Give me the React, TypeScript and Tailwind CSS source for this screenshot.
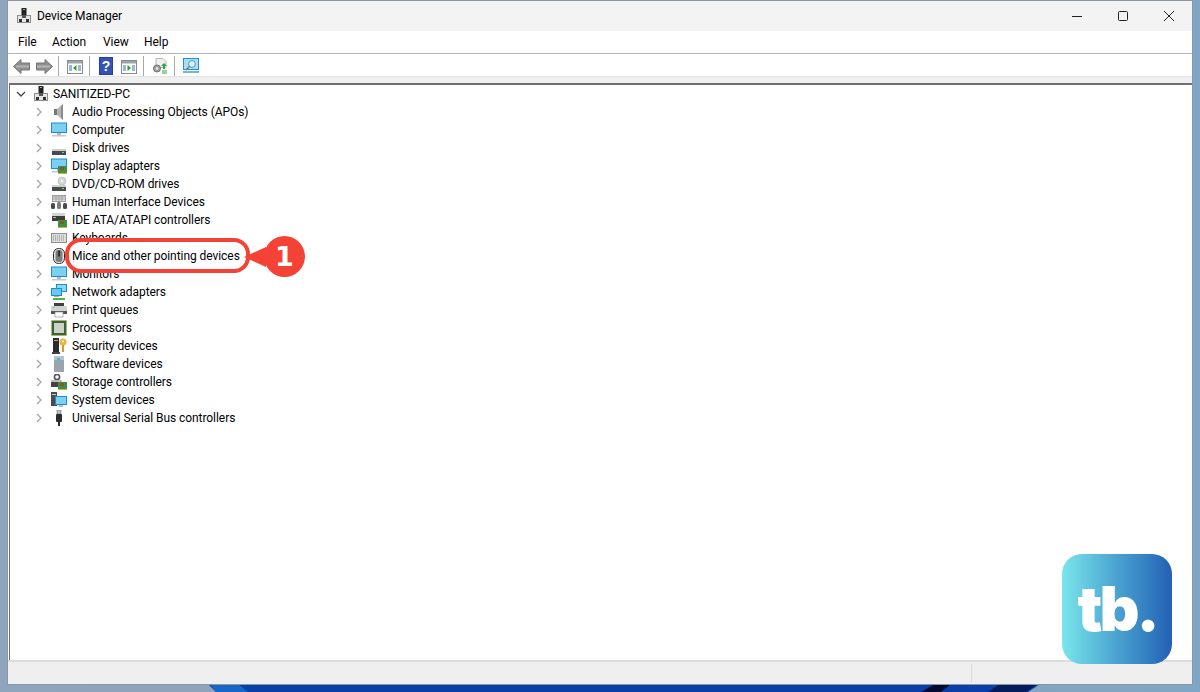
import type { ReactNode } from 'react';

const font = { fontFamily: 'Roboto, sans-serif' };

function Ico({ children }: { children: ReactNode }) {
  return (
    <svg width="16" height="16" viewBox="0 0 16 16" className="shrink-0">
      {children}
    </svg>
  );
}

function Chevron() {
  return (
    <svg width="8" height="10" viewBox="0 0 8 10" className="shrink-0">
      <path d="M2 1l4 4-4 4" fill="none" stroke="#a6a6a6" strokeWidth="1.3" />
    </svg>
  );
}

function Pc() {
  return (
    <Ico>
      <rect x="5.5" y="0" width="5" height="7" fill="#222" />
      <rect x="7" y="1" width="2" height="1" fill="#6fd06f" />
      <rect x="1" y="7" width="14" height="8" fill="#8d8d8d" />
      <rect x="2" y="8" width="12" height="6" fill="#e4e4e4" />
      <rect x="3" y="11" width="3" height="3" fill="#333" />
      <rect x="10" y="11" width="3" height="3" fill="#333" />
      <rect x="6" y="7" width="4" height="3" fill="#555" />
    </Ico>
  );
}

const Screen = () => (
  <>
    <rect x="0" y="0.5" width="16" height="10.5" fill="#1c8fd0" />
    <rect x="1" y="1.5" width="14" height="8.5" fill="#7cd0f4" />
    <rect x="6" y="11" width="4" height="2" fill="#bbb" />
    <rect x="1" y="13" width="14" height="1.5" fill="#c8c8c8" />
  </>
);

const Board = ({ x = 7, y = 8 }: { x?: number; y?: number }) => (
  <>
    <rect x={x} y={y} width="9" height="7" fill="#3e8f4e" />
    <rect x={x + 2} y={y + 1} width="4" height="3" fill="#7a5f22" />
    <rect x={x} y={y + 7} width="9" height="1" fill="#d8b030" />
  </>
);

const Drive = ({ y = 9 }: { y?: number }) => (
  <>
    <rect x="1" y={y} width="14" height="2" fill="#cfcfcf" />
    <rect x="1" y={y + 2} width="14" height="4" fill="#4a4a4a" />
    <rect x="11" y={y + 3} width="2" height="1" fill="#6fe06f" />
  </>
);

const tree: { name: string; icon: ReactNode }[] = [
  {
    name: 'Audio Processing Objects (APOs)',
    icon: (
      <Ico>
        <rect x="3" y="5" width="3" height="6" fill="#777" />
        <path d="M6 5l6-5v16l-6-5z" fill="#b4b4b4" />
        <path d="M10 2l2-2v16l-2-2z" fill="#8c8c8c" />
      </Ico>
    ),
  },
  { name: 'Computer', icon: <Ico><Screen /></Ico> },
  { name: 'Disk drives', icon: <Ico><Drive /></Ico> },
  { name: 'Display adapters', icon: <Ico><Screen /><Board /></Ico> },
  {
    name: 'DVD/CD-ROM drives',
    icon: (
      <Ico>
        <circle cx="11" cy="5" r="4" fill="#d6d6d6" stroke="#aaa" strokeWidth="0.5" />
        <circle cx="11" cy="5" r="1" fill="#fff" />
        <Drive />
      </Ico>
    ),
  },
  {
    name: 'Human Interface Devices',
    icon: (
      <Ico>
        <rect x="1" y="1" width="14" height="7" fill="#9c9c9c" />
        <rect x="2" y="2" width="12" height="5" fill="#dcdcdc" />
        <path d="M2 3h12M2 5h12M5 2v5M8 2v5M11 2v5" stroke="#8a8a8a" strokeWidth="0.6" />
        <rect x="0" y="9" width="4" height="6" rx="1.5" fill="#4a4a4a" />
        <rect x="6" y="8" width="4" height="7" rx="1.5" fill="#7b7b7b" />
        <rect x="12" y="9" width="4" height="6" rx="1.5" fill="#4a4a4a" />
      </Ico>
    ),
  },
  {
    name: 'IDE ATA/ATAPI controllers',
    icon: (
      <Ico>
        <rect x="1" y="1" width="13" height="3" fill="#d4d4d4" />
        <rect x="1" y="4" width="13" height="5" fill="#3d3d3d" />
        <rect x="2" y="5" width="3" height="1" fill="#6fe06f" />
        <Board />
      </Ico>
    ),
  },
  {
    name: 'Keyboards',
    icon: (
      <Ico>
        <rect x="0" y="3" width="16" height="10" fill="#8e8e8e" />
        <rect x="1" y="4" width="14" height="8" fill="#dedede" />
        <path d="M2 6h12M2 8h12M2 10h12" stroke="#8a8a8a" strokeWidth="1" strokeDasharray="1 1" />
      </Ico>
    ),
  },
  {
    name: 'Mice and other pointing devices',
    icon: (
      <Ico>
        <rect x="2.5" y="0.5" width="11" height="15" rx="5" fill="#e4e4e4" stroke="#2a2a2a" />
        <rect x="4.5" y="2" width="7" height="12" rx="3" fill="#7c7c7c" />
        <rect x="7.2" y="2.5" width="1.6" height="6" fill="#242424" />
      </Ico>
    ),
  },
  { name: 'Monitors', icon: <Ico><Screen /></Ico> },
  {
    name: 'Network adapters',
    icon: (
      <Ico>
        <rect x="5" y="0" width="11" height="8" fill="#1c8fd0" />
        <rect x="6" y="1" width="9" height="6" fill="#8ad6f4" />
        <rect x="0" y="4" width="11" height="8" fill="#1c8fd0" />
        <rect x="1" y="5" width="9" height="6" fill="#6cc8f0" />
        <rect x="3" y="12" width="5" height="1" fill="#aaa" />
        <rect x="2" y="14" width="12" height="2" fill="#48b848" />
      </Ico>
    ),
  },
  {
    name: 'Print queues',
    icon: (
      <Ico>
        <rect x="3" y="1" width="10" height="3" fill="#3f3f3f" />
        <rect x="0" y="4" width="16" height="7" fill="#d2d2d2" />
        <rect x="0" y="9" width="16" height="3" fill="#555" />
        <rect x="2" y="5" width="2" height="1" fill="#6fe06f" />
        <rect x="4" y="10" width="8" height="5" fill="#fff" stroke="#888" strokeWidth="0.6" />
      </Ico>
    ),
  },
  {
    name: 'Processors',
    icon: (
      <Ico>
        <rect x="0.5" y="0.5" width="15" height="15" fill="#2f6b3e" stroke="#c9a93a" strokeDasharray="1 1" />
        <rect x="2" y="2" width="12" height="12" fill="#33663f" />
        <rect x="3" y="3" width="10" height="10" fill="#d0d0c8" />
      </Ico>
    ),
  },
  {
    name: 'Security devices',
    icon: (
      <Ico>
        <rect x="2" y="0" width="6" height="14" fill="#2b2b2b" />
        <rect x="3" y="2" width="4" height="1" fill="#aaa" />
        <rect x="1" y="14" width="8" height="2" fill="#444" />
        <circle cx="12" cy="4" r="3.5" fill="#e6b43c" />
        <circle cx="12" cy="3.5" r="1" fill="#fff" />
        <rect x="11" y="7" width="2" height="7" fill="#d29a28" />
      </Ico>
    ),
  },
  {
    name: 'Software devices',
    icon: (
      <Ico>
        <rect x="3" y="0" width="10" height="16" fill="#9aa4ad" />
        <rect x="3" y="0" width="10" height="4" fill="#b8c2ca" />
        <rect x="6" y="2" width="3" height="2" fill="#2fc8d8" />
      </Ico>
    ),
  },
  {
    name: 'Storage controllers',
    icon: (
      <Ico>
        <circle cx="6" cy="3" r="2.6" fill="none" stroke="#555" strokeWidth="1.6" />
        <rect x="0" y="6" width="11" height="2" fill="#bbb" />
        <rect x="0" y="8" width="11" height="5" fill="#444" />
        <Board />
      </Ico>
    ),
  },
  {
    name: 'System devices',
    icon: (
      <Ico>
        <rect x="0" y="0" width="6" height="14" fill="#4a4a4a" />
        <rect x="1" y="2" width="4" height="1" fill="#ccc" />
        <rect x="4" y="4" width="12" height="9" fill="#1c8fd0" />
        <rect x="5" y="5" width="10" height="7" fill="#7cd0f4" />
        <rect x="8" y="13" width="4" height="2" fill="#bbb" />
      </Ico>
    ),
  },
  {
    name: 'Universal Serial Bus controllers',
    icon: (
      <Ico>
        <rect x="6" y="0" width="4" height="4" fill="#bdbdbd" stroke="#666" strokeWidth="0.5" />
        <rect x="5" y="4" width="6" height="8" rx="1" fill="#2d2d2d" />
        <rect x="7" y="12" width="2" height="4" fill="#2d2d2d" />
      </Ico>
    ),
  },
];

function Sep({ ml }: { ml: string }) {
  return <div className={`h-[20px] w-px bg-[#a8a8a8] ${ml}`} />;
}

function Arrow({ flip, ml }: { flip?: boolean; ml?: string }) {
  return (
    <svg width="17" height="15" viewBox="0 0 17 15" className={`${flip ? '-scale-x-100' : ''} ${ml ?? ''}`}>
      <path d="M0.5 7.5l7.5-7v3.5h8.5v7H8v3.5z" fill="#8f8f8f" stroke="#767676" />
      <path d="M3 7.5h13" stroke="#b4b4b4" strokeWidth="2" />
    </svg>
  );
}

function Win({ arrow }: { arrow: string }) {
  return (
    <svg width="16" height="14" viewBox="0 0 16 14" className="ml-[8px] mt-[2px]">
      <rect x="0.5" y="0.5" width="15" height="13" fill="#fff" stroke="#8a8a8a" />
      <rect x="1" y="1" width="14" height="2.5" fill="#9aa4ad" />
      <path d="M2 6h3M2 8h3M2 10h3M11 6h3M11 8h3M11 10h3" stroke="#3d6fa8" />
      {arrow === 'left' ? <path d="M9.5 5v6L6 8z" fill="#28a028" /> : <path d="M6.5 5v6L10 8z" fill="#28a028" />}
    </svg>
  );
}

export default function App() {
  return (
    <div
      className="relative h-[692px] w-[1200px] overflow-hidden bg-gradient-to-r from-[#8fa5bd] via-[#8fa0b6] to-[#7fa6c4] pl-2 pt-px"
      style={font}
    >
      {/* wallpaper peeking out under the window */}
      <svg className="absolute bottom-0 left-0" width="1200" height="8" viewBox="0 0 1200 8">
        <path d="M208 0h832l-12 8H216z" fill="#0b3fa8" />
        <path d="M210 0h28l10 8h-32z" fill="#1766c8" />
        <path d="M935 0h16l-10 8h-20z" fill="#020a30" />
        <path d="M1000 0h38l-12 8h-38z" fill="#041c5c" />
      </svg>

      <div className="relative flex h-[683px] w-[1184px] flex-col bg-white text-[12px] leading-none tracking-[-0.06px] text-black shadow-[0_0_0_1px_#8a96a3]">
        <div className="flex h-[30px] items-center bg-[#f3f3f3] pl-[8px]">
          <Pc />
          <span className="ml-[5px]">Device Manager</span>
          <div className="ml-auto flex items-center pr-[17px]">
            <svg width="12" height="12" viewBox="0 0 12 12" className="mr-[34px]">
              <path d="M1 6.5h10" stroke="#222" />
            </svg>
            <svg width="12" height="12" viewBox="0 0 12 12" className="mr-[34px]">
              <rect x="1.5" y="1.5" width="9" height="9" rx="1" fill="none" stroke="#222" />
            </svg>
            <svg width="12" height="12" viewBox="0 0 12 12">
              <path d="M1 1l10 10M11 1L1 11" stroke="#222" />
            </svg>
          </div>
        </div>

        <div className="flex h-[23px] items-center border-b border-[#b4b4be] pl-[10px]">
          <span className="w-[34px]">File</span>
          <span className="w-[51px]">Action</span>
          <span className="w-[41px]">View</span>
          <span>Help</span>
        </div>

        <div className="flex h-[22px] items-center pl-[5px] pt-[2px]">
          <Arrow />
          <Arrow flip ml="ml-[6px]" />
          <Sep ml="ml-[5px]" />
          <Win arrow="left" />
          <Sep ml="ml-[6px]" />
          <svg width="14" height="18" viewBox="0 0 14 18" className="ml-[9px]">
            <rect width="14" height="18" fill="#24409c" />
            <rect x="1" y="1" width="12" height="16" fill="#3553b4" />
            <text x="7" y="14" textAnchor="middle" fontSize="14" fontWeight="700" fill="#fff" fontFamily="Liberation Sans">?</text>
          </svg>
          <Win arrow="right" />
          <Sep ml="ml-[6px]" />
          <svg width="16" height="16" viewBox="0 0 16 16" className="ml-[8px]">
            <path d="M4 0.5h7l3 3v6H4z" fill="#f0f0f0" stroke="#b8b8b8" />
            <circle cx="5" cy="10.5" r="3.5" fill="#a0a0a0" stroke="#707070" />
            <circle cx="5" cy="10.5" r="1.2" fill="#eee" />
            <path d="M9 8l3-3 3 3h-2v3h-2V8z" fill="#2aa838" />
            <path d="M10 13h5M10 15h5" stroke="#2aa838" />
          </svg>
          <Sep ml="ml-[6px]" />
          <svg width="16" height="16" viewBox="0 0 16 16" className="ml-[8px]">
            <rect x="0.5" y="0.5" width="15" height="11" fill="#a8def4" stroke="#2a8fc8" />
            <circle cx="9" cy="6" r="3.4" fill="#d8f2fb" stroke="#5a9aaa" />
            <path d="M6.5 8.5L3 12" stroke="#777" strokeWidth="1.4" />
            <path d="M0 14h16" stroke="#3aa0d0" strokeWidth="1.5" />
          </svg>
        </div>

        <div className="h-[7px] border-t border-[#e2e2e2] bg-[#f0f0f0]" />

        <div className="ml-px flex-1 border-l border-t-2 border-l-[#6f6f6f] border-t-[#6f6f6f] pl-[6px]">
          <div className="flex h-[18px] items-center">
            <svg width="10" height="8" viewBox="0 0 10 8" className="shrink-0">
              <path d="M1 2l4 4 4-4" fill="none" stroke="#444" strokeWidth="1.3" />
            </svg>
            <span className="ml-[7px]"><Pc /></span>
            <span className="ml-[4px]">SANITIZED-PC</span>
          </div>
          {tree.map(row => (
            <div key={row.name} className="flex h-[18px] items-center pl-[19px]">
              <Chevron />
              <span className="ml-[8px] flex">{row.icon}</span>
              <span className="ml-[5px] whitespace-nowrap">{row.name}</span>
            </div>
          ))}
        </div>

        <div className="flex h-[24px] border-t-2 border-[#dcdcdc] bg-[#efefef]">
          <div className="my-[2px] ml-auto mr-[220px] w-px bg-[#d8d8d8]" />
        </div>

        {/* callout around the mouse row */}
        <div className="absolute left-[57px] top-[237px] h-[35px] w-[185px] rounded-[16px] border-[4px] border-[#f44336]" />
        <div className="absolute left-[236px] top-[246px] h-0 w-0 border-y-[10px] border-r-[22px] border-y-transparent border-r-[#f44336]" />
        <div
          className="absolute left-[256px] top-[235px] flex h-[41px] w-[41px] items-center justify-center rounded-full bg-[#f44336] text-[27px] font-bold tracking-normal text-white"
          style={{ fontFamily: '"DejaVu Sans", sans-serif' }}
        >
          1
        </div>

        {/* site badge */}
        <div
          className="absolute left-[1054px] top-[553px] flex h-[110px] w-[110px] items-center justify-center rounded-[20px] bg-gradient-to-r from-[#7ae6ea] to-[#2460b4] text-[62px] font-black tracking-[-3px] text-white"
          style={{ fontFamily: 'Inter, sans-serif' }}
        >
          tb.
        </div>
      </div>
    </div>
  );
}
